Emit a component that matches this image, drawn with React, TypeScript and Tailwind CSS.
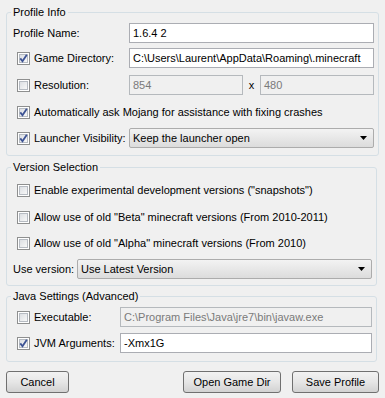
import React from "react";

function Check({ checked }: { checked?: boolean }) {
  return (
    <span className="relative block w-[13px] h-[13px] shrink-0 border border-[#8e8f8f] bg-white p-[1px]">
      <span className="block w-full h-full border border-[#b6bbc2] bg-gradient-to-br from-[#dcdfe3] to-[#f8f8f8]" />
      {checked ? (
        <svg className="absolute left-0 top-0" width="11" height="11" viewBox="0 0 11 11">
          <path d="M2.3 5.4 L4.5 8.3 L8.8 1.8" fill="none" stroke="#3d5394" strokeWidth="1.8" />
        </svg>
      ) : null}
    </span>
  );
}

function Field({ value, disabled, className = "" }: { value: string; disabled?: boolean; className?: string }) {
  return (
    <div
      className={
        "h-[20px] flex items-center px-[3px] border whitespace-nowrap overflow-hidden " +
        (disabled ? "bg-[#f0f0f0] border-[#b5b9bd] text-[#7a7a7a] " : "bg-white border-[#abadb3] ") +
        className
      }
    >
      {value}
    </div>
  );
}

function Combo({ value, className = "" }: { value: string; className?: string }) {
  return (
    <div
      className={
        "h-[20px] flex items-center justify-between pl-[3px] pr-[6px] border border-[#acacac] rounded-[2px] bg-gradient-to-b from-[#f3f3f3] to-[#dcdcdc] " +
        className
      }
    >
      <span>{value}</span>
      <svg width="7" height="4" viewBox="0 0 7 4">
        <path d="M0 0 H7 L3.5 4 Z" fill="#000" />
      </svg>
    </div>
  );
}

function CheckLabel({ checked, label, width }: { checked?: boolean; label: string; width?: string }) {
  return (
    <div className={"flex items-center shrink-0 pl-[4px] gap-[4px] whitespace-nowrap " + (width ?? "")}>
      <Check checked={checked} />
      <span>{label}</span>
    </div>
  );
}

function Button({ label, className = "" }: { label: string; className?: string }) {
  return (
    <div
      className={
        "h-[22px] flex items-center justify-center border border-[#707070] rounded-[3px] bg-gradient-to-b from-[#f2f2f2] via-[#e6e6e6] to-[#d2d2d2] " +
        className
      }
    >
      {label}
    </div>
  );
}

export default function App() {
  return (
    <div className="w-[385px] h-[398px] overflow-hidden bg-[#f0f0f0] text-black text-[11px] leading-[14px] font-['Liberation_Sans',Arial,sans-serif] px-[6px] pt-[5px]">
      <fieldset className="w-[371px] border border-[#d5dfe5] rounded-[3px] p-0 m-0">
        <legend className="ml-[4px] px-[2px]">Profile Info</legend>
        <div className="pl-[6px] pr-[4px] pb-[7px]">
          <div className="mt-[4px] flex items-center">
            <span className="w-[116px] shrink-0">Profile Name:</span>
            <Field value="1.6.4 2" className="flex-1" />
          </div>
          <div className="mt-[5px] flex items-center">
            <CheckLabel checked label="Game Directory:" width="w-[116px]" />
            <Field value="C:\Users\Laurent\AppData\Roaming\.minecraft" className="flex-1" />
          </div>
          <div className="mt-[7px] flex items-center">
            <CheckLabel label="Resolution:" width="w-[116px]" />
            <Field value="854" disabled className="w-[114px]" />
            <span className="w-[17px] text-center">x</span>
            <Field value="480" disabled className="w-[114px]" />
          </div>
          <div className="mt-[7px] h-[20px] flex items-center">
            <CheckLabel checked label="Automatically ask Mojang for assistance with fixing crashes" />
          </div>
          <div className="mt-[6px] flex items-center">
            <CheckLabel checked label="Launcher Visibility:" width="w-[116px]" />
            <Combo value="Keep the launcher open" className="flex-1" />
          </div>
        </div>
      </fieldset>

      <fieldset className="mt-[4px] w-[371px] border border-[#d5dfe5] rounded-[3px] p-0 m-0">
        <legend className="ml-[4px] px-[2px]">Version Selection</legend>
        <div className="pl-[6px] pr-[4px] pb-[6px]">
          <div className="mt-[6px] h-[20px] flex items-center">
            <CheckLabel label={'Enable experimental development versions ("snapshots")'} />
          </div>
          <div className="mt-[7px] h-[20px] flex items-center">
            <CheckLabel label={'Allow use of old "Beta" minecraft versions (From 2010-2011)'} />
          </div>
          <div className="mt-[6px] h-[20px] flex items-center">
            <CheckLabel label={'Allow use of old "Alpha" minecraft versions (From 2010)'} />
          </div>
          <div className="mt-[6px] flex items-center">
            <span className="w-[64px] shrink-0">Use version:</span>
            <Combo value="Use Latest Version" className="flex-1" />
          </div>
        </div>
      </fieldset>

      <fieldset className="mt-[3px] w-[371px] border border-[#d5dfe5] rounded-[3px] p-0 m-0">
        <legend className="ml-[4px] px-[2px]">Java Settings (Advanced)</legend>
        <div className="pl-[6px] pr-[4px] pb-[8px]">
          <div className="mt-[4px] flex items-center">
            <CheckLabel label="Executable:" width="w-[107px]" />
            <Field value="C:\Program Files\Java\jre7\bin\javaw.exe" disabled className="flex-1" />
          </div>
          <div className="mt-[6px] flex items-center">
            <CheckLabel checked label="JVM Arguments:" width="w-[107px]" />
            <Field value="-Xmx1G" className="flex-1" />
          </div>
        </div>
      </fieldset>

      <div className="mt-[9px] w-[373px] flex items-center">
        <Button label="Cancel" className="w-[63px]" />
        <div className="flex-1" />
        <Button label="Open Game Dir" className="w-[98px]" />
        <Button label="Save Profile" className="ml-[11px] w-[87px]" />
      </div>
    </div>
  );
}
